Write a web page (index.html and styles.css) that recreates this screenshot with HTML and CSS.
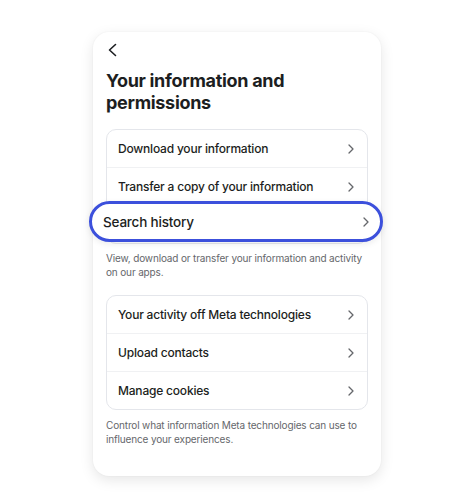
FILE: index.html
```html
<!DOCTYPE html>
<html lang="en">
<head>
<meta charset="utf-8">
<link rel="stylesheet" href="styles.css">
</head>
<body>
<div class="page">
  <div class="card">
    <div class="back">
      <svg width="12" height="14" viewBox="0 0 12 14"><path d="M8.5 1.5 L2.5 7 L8.5 12.5" fill="none" stroke="#1c1e21" stroke-width="1.6" stroke-linecap="round" stroke-linejoin="round"/></svg>
    </div>
    <h1 class="title">Your information and permissions</h1>
    <div class="group">
      <div class="row"><span>Download your information</span><svg class="chev" width="8" height="12" viewBox="0 0 8 12"><path d="M2 2 L6 6 L2 10" fill="none" stroke="#65676b" stroke-width="1.3" stroke-linecap="round" stroke-linejoin="round"/></svg></div>
      <div class="row"><span>Transfer a copy of your information</span><svg class="chev" width="8" height="12" viewBox="0 0 8 12"><path d="M2 2 L6 6 L2 10" fill="none" stroke="#65676b" stroke-width="1.3" stroke-linecap="round" stroke-linejoin="round"/></svg></div>
      <div class="row highlighted">
        <div class="pill"><span>Search history</span><svg class="chev" width="8" height="12" viewBox="0 0 8 12"><path d="M2 2 L6 6 L2 10" fill="none" stroke="#65676b" stroke-width="1.3" stroke-linecap="round" stroke-linejoin="round"/></svg></div>
      </div>
    </div>
    <p class="desc desc-first">View, download or transfer your information and activity on our apps.</p>
    <div class="group">
      <div class="row"><span>Your activity off Meta technologies</span><svg class="chev" width="8" height="12" viewBox="0 0 8 12"><path d="M2 2 L6 6 L2 10" fill="none" stroke="#65676b" stroke-width="1.3" stroke-linecap="round" stroke-linejoin="round"/></svg></div>
      <div class="row"><span>Upload contacts</span><svg class="chev" width="8" height="12" viewBox="0 0 8 12"><path d="M2 2 L6 6 L2 10" fill="none" stroke="#65676b" stroke-width="1.3" stroke-linecap="round" stroke-linejoin="round"/></svg></div>
      <div class="row"><span>Manage cookies</span><svg class="chev" width="8" height="12" viewBox="0 0 8 12"><path d="M2 2 L6 6 L2 10" fill="none" stroke="#65676b" stroke-width="1.3" stroke-linecap="round" stroke-linejoin="round"/></svg></div>
    </div>
    <p class="desc">Control what information Meta technologies can use to influence your experiences.</p>
  </div>
</div>
</body>
</html>
```
FILE: styles.css
```css
* { box-sizing: border-box; }
html, body { margin: 0; padding: 0; background: #ffffff; }
body {
  font-family: Inter, "Noto Sans", "Liberation Sans", sans-serif;
  color: #1c1e21;
  width: 474px;
  height: 501px;
  overflow: hidden;
}
.page {
  display: flex;
  justify-content: center;
  padding-top: 32px;
}
.card {
  width: 288px;
  height: 444px;
  background: #fff;
  border-radius: 16px;
  box-shadow: 0 4px 14px rgba(0,0,0,0.10), 0 0 2px rgba(0,0,0,0.05);
  padding: 10px 13px 0 13px;
}
.back {
  height: 16px;
  display: flex;
  align-items: center;
  padding-left: 1px;
}
.title {
  margin: 12px 0 15px 0;
  font-size: 18px;
  line-height: 22px;
  font-weight: 700;
  letter-spacing: -0.3px;
  color: #1c1e21;
  width: 200px;
}
.group {
  border: 1px solid #e4e6eb;
  border-radius: 10px;
}
.row {
  height: 38px;
  display: flex;
  align-items: center;
  justify-content: space-between;
  padding: 0 12px 0 11px;
  font-size: 12px;
  font-weight: 500;
  letter-spacing: -0.2px;
  color: #1c1e21;
  border-top: 1px solid #f0f1f3;
  position: relative;
}
.row:first-child { border-top: none; height: 37px; }
.chev { display: block; }
.pill {
  position: absolute;
  left: -18px;
  right: -16px;
  top: -5px;
  bottom: 1px;
  background: #fff;
  border: 3px solid #3c50dc;
  border-radius: 21px;
  display: flex;
  align-items: center;
  justify-content: space-between;
  padding: 0 10px 0 11px;
  font-size: 13.5px;
  font-weight: 500;
  letter-spacing: -0.2px;
  box-shadow: 0 2px 6px rgba(0,0,0,0.08);
}
.desc {
  margin: 8px 0 16px 0;
  font-size: 10px;
  line-height: 14px;
  letter-spacing: -0.15px;
  color: #65676b;
}
.desc-first { margin-top: 7px; }
```
